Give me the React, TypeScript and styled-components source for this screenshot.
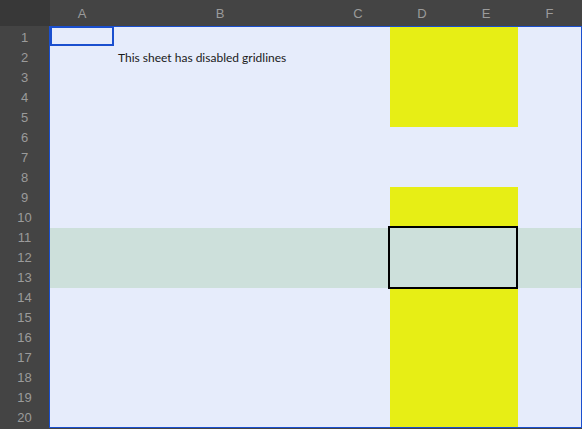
import React from "react";
import styled, { createGlobalStyle } from "styled-components";

const Global = createGlobalStyle`
  html, body { margin: 0; padding: 0; background: #444444; }
  body { font-family: "Liberation Sans", Arial, sans-serif; }
`;

const COLS = [
  { name: "A", w: 64 },
  { name: "B", w: 212 },
  { name: "C", w: 64 },
  { name: "D", w: 64 },
  { name: "E", w: 64 },
  { name: "F", w: 63 },
];
const ROW_COUNT = 20;
const colTemplate = COLS.map((c) => `${c.w}px`).join(" ");

const Frame = styled.div`
  width: 582px;
  height: 429px;
  display: flex;
  flex-direction: column;
  background: #444444;
  overflow: hidden;
`;

const HeaderRow = styled.div`
  display: flex;
  height: 26px;
  flex: none;
`;

const Corner = styled.div`
  width: 50px;
  flex: none;
  background: #383838;
`;

const ColHeader = styled.div<{ $w: number }>`
  width: ${(p) => p.$w}px;
  flex: none;
  display: flex;
  align-items: center;
  justify-content: center;
  color: #9b9b9b;
  font-size: 13px;
  background: #444444;
`;

const Body = styled.div`
  display: flex;
  flex: none;
`;

const RowHeaders = styled.div`
  width: 49px;
  flex: none;
  padding-top: 1px;
  display: flex;
  flex-direction: column;
`;

const RowLabel = styled.div`
  height: 20px;
  display: flex;
  align-items: center;
  justify-content: center;
  color: #9b9b9b;
  font-size: 13px;
`;

const Sheet = styled.div`
  border: 1px solid #1a4fcf;
  background: #e6ecfb;
  display: grid;
  grid-template-columns: ${colTemplate};
  grid-template-rows: repeat(${ROW_COUNT}, 20px);
`;

const Fill = styled.div<{ $area: string; $color: string }>`
  grid-area: ${(p) => p.$area};
  background: ${(p) => p.$color};
`;

const Band = styled(Fill)`
  margin: 1px 0 -1px 0;
`;

const CellText = styled.div<{ $area: string }>`
  grid-area: ${(p) => p.$area};
  display: flex;
  align-items: center;
  padding-left: 4px;
  white-space: nowrap;
  font-family: Lato, "Liberation Sans", sans-serif;
  font-size: 12px;
  color: #1a1a1a;
  z-index: 1;
`;

const ActiveCell = styled.div<{ $area: string }>`
  grid-area: ${(p) => p.$area};
  border: 2px solid #1a4fcf;
  margin: -1px 0 1px 0;
  z-index: 2;
`;

const RangeBox = styled.div<{ $area: string }>`
  grid-area: ${(p) => p.$area};
  border: 2px solid #000000;
  margin: -1px 0 -2px -2px;
  z-index: 2;
`;

export default function App() {
  return (
    <>
      <Global />
      <Frame>
        <HeaderRow>
          <Corner />
          {COLS.map((c) => (
            <ColHeader key={c.name} $w={c.w}>
              {c.name}
            </ColHeader>
          ))}
        </HeaderRow>
        <Body>
          <RowHeaders>
            {Array.from({ length: ROW_COUNT }, (_, i) => (
              <RowLabel key={i}>{i + 1}</RowLabel>
            ))}
          </RowHeaders>
          <Sheet>
            <Fill $area="1 / 4 / 6 / 6" $color="#e7ee15" />
            <Fill $area="9 / 4 / 21 / 6" $color="#e7ee15" />
            <Band $area="11 / 1 / 14 / 7" $color="#cde0db" />
            <CellText $area="2 / 2 / 3 / 3">This sheet has disabled gridlines</CellText>
            <ActiveCell $area="1 / 1 / 2 / 2" />
            <RangeBox $area="11 / 4 / 14 / 6" />
          </Sheet>
        </Body>
      </Frame>
    </>
  );
}
